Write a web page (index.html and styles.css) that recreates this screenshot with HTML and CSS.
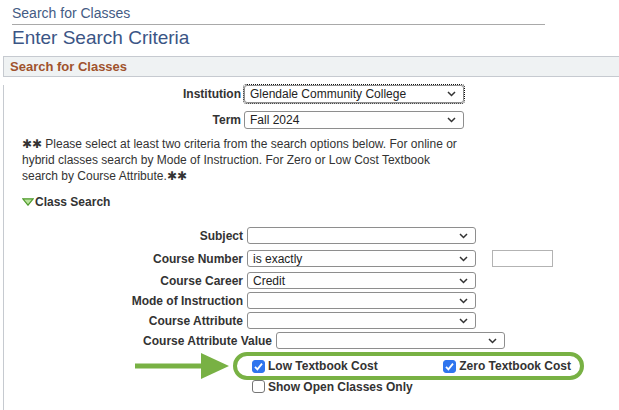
FILE: index.html
```html
<!DOCTYPE html>
<html lang="en">
<head>
  <meta charset="UTF-8">
  <title>Search for Classes</title>
  <link rel="stylesheet" href="styles.css">
</head>
<body>
  <!-- Page heading -->
  <div class="crumb">Search for Classes</div>
  <h1 class="page-title">Enter Search Criteria</h1>

  <div class="panel">
    <div class="panel-head">Search for Classes</div>
    <div class="panel-body">

      <div class="row row-inst">
        <span class="lbl lbl-top">Institution</span>
        <div class="select select-top focus">
          <span>Glendale Community College</span>
          <svg class="chev" width="9" height="6" viewBox="0 0 9 6"><path d="M1 1l3.5 3.5L8 1" fill="none" stroke="#333" stroke-width="1.5"/></svg>
        </div>
      </div>
      <div class="row row-term">
        <span class="lbl lbl-top">Term</span>
        <div class="select select-top">
          <span>Fall 2024</span>
          <svg class="chev" width="9" height="6" viewBox="0 0 9 6"><path d="M1 1l3.5 3.5L8 1" fill="none" stroke="#333" stroke-width="1.5"/></svg>
        </div>
      </div>

      <p class="note">✱✱ Please select at least two criteria from the search options below. For online or hybrid classes search by Mode of Instruction. For Zero or Low Cost Textbook search by Course Attribute.✱✱</p>

      <div class="group-title">
        <svg width="12" height="8" viewBox="0 0 12 8"><polygon points="0.8,0.8 11.2,0.8 6,7.2" fill="#b9e29c" stroke="#4f9a2c" stroke-width="1.2"/></svg>
        <span>Class Search</span>
      </div>

      <div class="row row-subject">
        <span class="lbl">Subject</span>
        <div class="select">
          <span></span>
          <svg class="chev" width="9" height="6" viewBox="0 0 9 6"><path d="M1 1l3.5 3.5L8 1" fill="none" stroke="#333" stroke-width="1.5"/></svg>
        </div>
      </div>
      <div class="row row-number">
        <span class="lbl">Course Number</span>
        <div class="select">
          <span>is exactly</span>
          <svg class="chev" width="9" height="6" viewBox="0 0 9 6"><path d="M1 1l3.5 3.5L8 1" fill="none" stroke="#333" stroke-width="1.5"/></svg>
        </div>
        <div class="text-input"></div>
      </div>
      <div class="row row-career">
        <span class="lbl">Course Career</span>
        <div class="select">
          <span>Credit</span>
          <svg class="chev" width="9" height="6" viewBox="0 0 9 6"><path d="M1 1l3.5 3.5L8 1" fill="none" stroke="#333" stroke-width="1.5"/></svg>
        </div>
      </div>
      <div class="row">
        <span class="lbl">Mode of Instruction</span>
        <div class="select">
          <span></span>
          <svg class="chev" width="9" height="6" viewBox="0 0 9 6"><path d="M1 1l3.5 3.5L8 1" fill="none" stroke="#333" stroke-width="1.5"/></svg>
        </div>
      </div>
      <div class="row">
        <span class="lbl">Course Attribute</span>
        <div class="select">
          <span></span>
          <svg class="chev" width="9" height="6" viewBox="0 0 9 6"><path d="M1 1l3.5 3.5L8 1" fill="none" stroke="#333" stroke-width="1.5"/></svg>
        </div>
      </div>
      <div class="row">
        <span class="lbl lbl-wide">Course Attribute Value</span>
        <div class="select">
          <span></span>
          <svg class="chev" width="9" height="6" viewBox="0 0 9 6"><path d="M1 1l3.5 3.5L8 1" fill="none" stroke="#333" stroke-width="1.5"/></svg>
        </div>
      </div>

      <!-- Highlighted textbook options -->
      <div class="highlight">
        <svg class="arrow" width="96" height="28" viewBox="0 0 96 28"><rect x="0" y="11.5" width="69" height="5" fill="#78b144"/><polygon points="66,1 94,14 66,27" fill="#78b144"/></svg>
        <label class="check-item">
          <span class="check checked"><svg width="13" height="13" viewBox="0 0 13 13"><path d="M3 6.8l2.4 2.5L10 3.6" fill="none" stroke="#fff" stroke-width="1.8"/></svg></span>
          Low Textbook Cost
        </label>
        <label class="check-item">
          <span class="check checked"><svg width="13" height="13" viewBox="0 0 13 13"><path d="M3 6.8l2.4 2.5L10 3.6" fill="none" stroke="#fff" stroke-width="1.8"/></svg></span>
          Zero Textbook Cost
        </label>
      </div>
      <label class="check-item open-only">
        <span class="check"></span>
        Show Open Classes Only
      </label>

    </div>
  </div>
</body>
</html>
```

FILE: styles.css
```css
body {
  margin: 0;
  font-family: "Liberation Sans", Arial, sans-serif;
  color: #333;
  background: #fff;
}
.crumb {
  margin-left: 12px;
  width: 533px;
  padding: 5px 0 2px;
  font-size: 14px;
  line-height: 17px;
  color: #445b84;
  border-bottom: 1px solid #a9a9a9;
}
.page-title {
  margin: 2px 0 0 12px;
  font-size: 19px;
  line-height: 22px;
  font-weight: normal;
  color: #3b5585;
}
.panel {
  margin: 7px 0 0 3px;
}
.panel-head {
  height: 19px;
  line-height: 19px;
  padding-left: 6px;
  background: #eff2f3;
  border: 1px solid #c6cad0;
  border-right: none;
  font-size: 13px;
  font-weight: bold;
  color: #a0522d;
}
.panel-body {
  border-left: 1px solid #c6cad0;
  min-height: 340px;
}
.row {
  display: flex;
  align-items: center;
  margin-top: 3px;
}
.row-inst {
  margin-top: 8px;
}
.row-term {
  margin-top: 8px;
}
.row-subject {
  margin-top: 17px;
}
.row-number {
  margin-top: 6px;
}
.row-career {
  margin-top: 5px;
}
.lbl {
  width: 239px;
  margin-right: 4px;
  text-align: right;
  font-size: 12px;
  font-weight: bold;
  color: #333;
  white-space: nowrap;
}
.lbl-top {
  width: 237px;
  margin-right: 3px;
}
.lbl-wide {
  width: 268px;
}
.select {
  box-sizing: border-box;
  width: 229px;
  height: 17px;
  display: flex;
  align-items: center;
  justify-content: space-between;
  padding: 0 7px 0 5px;
  border: 1px solid #8e8e8e;
  border-radius: 3px;
  background: #fff;
  font-size: 12px;
  color: #222;
}
.select-top {
  width: 220px;
  height: 18px;
}
.select.focus {
  outline: 1px dotted #111;
  outline-offset: 0;
}
.chev {
  flex-shrink: 0;
}
.text-input {
  box-sizing: border-box;
  width: 61px;
  height: 17px;
  margin-left: 16px;
  border: 1px solid #b3b3b3;
}
.note {
  width: 446px;
  margin: 7px 0 0 18px;
  font-size: 12px;
  line-height: 16px;
  color: #333;
}
.group-title {
  display: flex;
  align-items: center;
  gap: 1px;
  margin: 10px 0 0 18px;
  height: 16px;
  font-size: 12px;
  font-weight: bold;
  color: #333;
}
.highlight {
  position: relative;
  box-sizing: border-box;
  width: 351px;
  height: 28px;
  margin: 3px 0 0 229px;
  padding: 0 9px 0 15px;
  border: 4px solid #78b144;
  border-radius: 14px;
  display: flex;
  align-items: center;
  justify-content: space-between;
}
.arrow {
  position: absolute;
  left: -102px;
  top: -4px;
}
.check-item {
  display: flex;
  align-items: center;
  gap: 3px;
  font-size: 12px;
  font-weight: bold;
  color: #333;
}
.check {
  box-sizing: border-box;
  width: 13px;
  height: 13px;
  border: 1px solid #767676;
  border-radius: 3px;
  background: #fff;
  display: flex;
}
.check.checked {
  background: #2f75ee;
  border-color: #2f75ee;
}
.check.checked svg {
  margin: -1px;
}
.open-only {
  margin: 0 0 0 248px;
  height: 13px;
}
```
